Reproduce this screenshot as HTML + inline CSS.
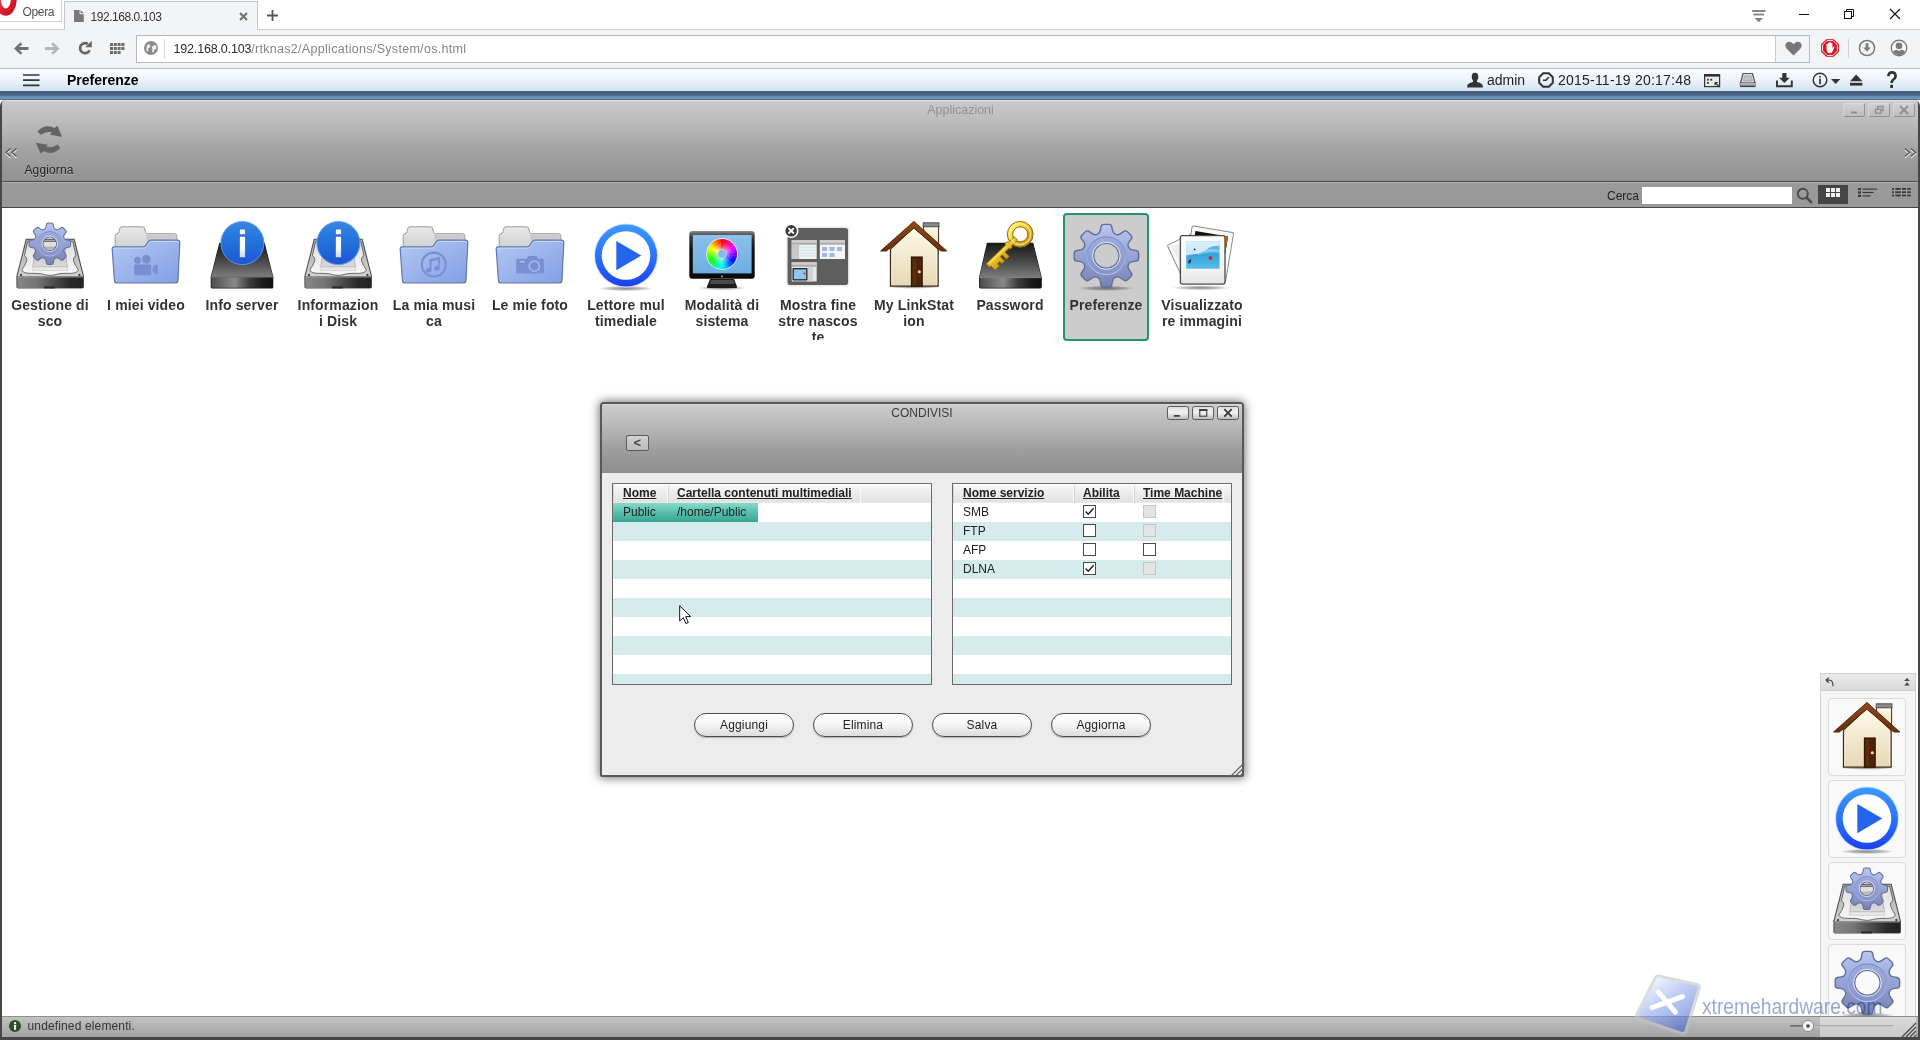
<!DOCTYPE html>
<html lang="it">
<head>
<meta charset="utf-8">
<title>192.168.0.103</title>
<style>
*{box-sizing:border-box;margin:0;padding:0}
html,body{width:1920px;height:1040px;overflow:hidden;background:#fff;font-family:"Liberation Sans",sans-serif;color:#222}
.abs{position:absolute}
#root{position:relative;width:1920px;height:1040px;overflow:hidden;background:#fff}
svg{display:block;overflow:visible}
/* ---------- browser chrome ---------- */
#tabstrip{left:0;top:0;width:1920px;height:30px;background:#fff;border-bottom:1px solid #c9cdd1}
#operabtn{left:-1px;top:-1px;width:63px;height:23px;border:1px solid #cfd2d5;background:#fff}
#operabtn span{position:absolute;left:22.5px;top:5px;font-size:12px;color:#505050;letter-spacing:-.35px}
#tab{left:64px;top:1px;width:194px;height:29px;background:#f3f4f6;border:1px solid #c3c7cb;border-bottom:none}
#tab span{position:absolute;left:25.5px;top:8px;font-size:12px;color:#333;letter-spacing:-.45px}
#navbar{left:0;top:30px;width:1920px;height:39px;background:#f3f4f6;border-bottom:1px solid #b9bdc1}
#addr{left:136px;top:35px;width:1674px;height:28px;background:#fff;border:1px solid #b4b8bc}
#addr .sep{position:absolute;left:27px;top:3px;width:1px;height:20px;background:#d5d7d9}
#addr .url{position:absolute;left:36.5px;top:6px;font-size:12.5px;color:#2c2c2c;white-space:nowrap;letter-spacing:-.17px}
#addr .url i{font-style:normal;color:#858585;letter-spacing:.3px}
#heartbox{position:absolute;right:0;top:0;width:34px;height:26px;border-left:1px solid #c8cacc;background:#f3f4f6}
/* ---------- app header ---------- */
#apphead{left:0;top:69px;width:1920px;height:22px;background:linear-gradient(#fdfeff 0%,#eef4fb 45%,#d3e2f4 100%)}
#apphead .title{position:absolute;left:67px;top:3px;font-size:14px;font-weight:bold;color:#000}
#apphead .txt{position:absolute;top:3px;font-size:14px;color:#222;white-space:nowrap}
#apphead .dt{letter-spacing:.22px}
#bluebar{left:0;top:91px;width:1920px;height:9px;background:linear-gradient(#485f80 0%,#4b6486 25%,#4e6a8f 48%,#688eb8 62%,#7096be 86%,#5a6c86 92%,#5a6c86 100%)}
/* ---------- main window ---------- */
#win{left:0;top:100px;width:1920px;height:940px;background:#474747;border-radius:6px 6px 0 0}
#wtool{left:2px;top:100px;width:1916px;height:81px;border-radius:4px 4px 0 0;background:linear-gradient(#dcdcdc 0,#dcdcdc 1px,#c8c8c8 2px,#bdbdbd 25%,#a4a4a4 60%,#919191 100%)}
#wtitle{left:0;top:103px;width:1921px;text-align:center;font-size:12.5px;color:#939393}
#wsearch{left:2px;top:182px;width:1916px;height:25px;background:#999;border-top:1px solid #b2b2b2}
#content{left:2px;top:208px;width:1916px;height:808px;background:#fff}
#status{left:2px;top:1016px;width:1916px;height:21px;background:linear-gradient(#c2c2c2,#a2a2a2);border-top:1px solid #8e8e8e}
#status .dk{position:absolute;left:1818px;top:0;width:96px;height:20px;background:rgba(255,255,255,.42)}
#status span{position:absolute;left:25.5px;top:2px;font-size:12px;color:#333;letter-spacing:.14px}
.wbtn{top:103px;width:22px;height:14px;border:1px solid;border-color:#dcdcdc #959595 #8e8e8e #d6d6d6;border-radius:2px;background:linear-gradient(#d2d2d2,#bebebe)}
.lbl{position:absolute;font-size:12px;color:#222;white-space:nowrap}
/* ---------- app grid ---------- */
.app{position:absolute;top:213px;width:86px;height:128px;text-align:center}
.app .ic{position:absolute;left:7px;top:7px;width:72px;height:72px}
.app .nm{position:absolute;left:-4px;top:84px;width:94px;font-size:14px;line-height:16px;font-weight:bold;color:#333;text-align:center;height:43px;overflow:hidden;letter-spacing:.13px;white-space:nowrap}
.app.sel{background:#cccccc;border:2px solid #23936c;border-radius:4px}
.app.sel .ic{left:5px;top:5px}
.app.sel .nm{left:-6px;top:82px}
/* ---------- dialog ---------- */
#dlg{left:600px;top:402px;width:644px;height:375px;background:#ececec;border:2px solid #585858;border-radius:4px 4px 2px 2px;box-shadow:0 0 10px 1px rgba(0,0,0,.55)}
#dhead{position:absolute;left:0;top:0;width:640px;height:69px;border-radius:2px 2px 0 0;background:linear-gradient(#dadada 0,#d2d2d2 1px,#cbcbcb 2px,#b9b9b9 30%,#9f9f9f 65%,#8e8e8e 100%)}
#dtitle{position:absolute;left:0;top:2px;width:640px;text-align:center;font-size:12px;color:#3c3c3c}
.dbtn{position:absolute;top:2.2px;width:21.6px;height:13.4px;border:1px solid #5c5c5c;border-radius:2.5px;background:linear-gradient(#dedede 0%,#f2f2f2 45%,#d6d6d6 75%,#bcbcbc 100%)}
.tbl{position:absolute;top:79px;height:202px;border:1px solid #6a6a6a;background:#fff;overflow:hidden}
.tbl .hd{position:absolute;left:0;top:1px;height:18px;width:100%;background:linear-gradient(#f7f7f7,#e2e2e2);border-bottom:1px solid #e9e9e9}
.tbl .hc{position:absolute;top:1px;height:18px;border-right:1px solid #fafafa;box-shadow:1px 0 0 #d6d6d6 inset}
.tbl .ht{position:absolute;top:2px;font-size:12px;font-weight:bold;color:#222;text-decoration:underline;white-space:nowrap}
.row{position:absolute;left:0;width:100%;height:19px}
.row.alt{background:#d6ebeb}
.row span{position:absolute;top:2px;font-size:12px;color:#222;white-space:nowrap}
.cb{position:absolute;top:2px;width:13px;height:13px;border:1px solid #4a4a4a;background:#fff}
.cb.dis{border-color:#c6c6c6;background:#e4e4e4}
.pbtn{position:absolute;top:309px;width:100px;height:23.5px;border:1px solid #4d4d4d;border-radius:13px;background:linear-gradient(#ffffff 0%,#f6f6f6 45%,#dedede 100%);font-size:12px;color:#222;text-align:center;line-height:22.6px;box-shadow:0 1px 1px rgba(0,0,0,.25);letter-spacing:.15px}
/* ---------- dock ---------- */
#dock{left:1820px;top:673px;width:96px;height:343px;background:#f5f5f5;border:1px solid #d0d0d0;border-bottom:none;overflow:hidden}
#dockhd{position:absolute;left:0;top:0;width:94px;height:17px;background:linear-gradient(#ebebeb,#d9d9d9);border-bottom:1px solid #cfcfcf}
.dcell{position:absolute;left:7.2px;width:77.6px;height:77.5px;border:1px solid #dadada;border-radius:4px;background:#f9f9f9}
</style>
</head>
<body>
<div id="root">
<!-- BROWSER CHROME -->
<div id="tabstrip" class="abs"></div>
<div id="operabtn" class="abs"><span>Opera</span></div>
<div id="tab" class="abs"><span>192.168.0.103</span></div>
<div id="navbar" class="abs"></div>
<div id="addr" class="abs"><div class="sep"></div><div class="url">192.168.0.103<i>/rtknas2/Applications/System/os.html</i></div><div id="heartbox"></div></div>
<!--CHROMEICONS-->
<svg class="abs" style="left:0px;top:0px" width="18" height="17" viewBox="0 0 18 17"><defs><linearGradient id="gOp" x1="0" y1="0" x2="1" y2="1"><stop offset="0" stop-color="#ff6a6a"/><stop offset=".6" stop-color="#e02030"/><stop offset="1" stop-color="#b80c1a"/></linearGradient><clipPath id="cpOp"><rect x="0" y="0" width="18" height="17"/></clipPath></defs><path clip-path="url(#cpOp)" fill-rule="evenodd" d="M-5.6 -1 A11.2 16.8 0 1 0 16.8 -1 A11.2 16.8 0 1 0 -5.6 -1 Z M0.8 -1 A5 9.4 0 1 1 10.8 -1 A5 9.4 0 1 1 0.8 -1 Z" fill="url(#gOp)"/></svg>
<svg class="abs" style="left:74px;top:10px" width="10" height="12" viewBox="0 0 10 12"><path d="M0 0 L5.6 0 L5.6 4.2 L9.8 4.2 L9.8 12 L0 12 Z M6.6 0 L9.8 3.2 L6.6 3.2 Z" fill="#7a7a7a"/></svg>
<svg class="abs" style="left:239px;top:12px" width="9" height="9" viewBox="0 0 9 9"><path d="M1 1 L8 8 M8 1 L1 8" stroke="#6e6e6e" stroke-width="2"/></svg>
<svg class="abs" style="left:267px;top:10px" width="11" height="11" viewBox="0 0 11 11"><path d="M5.5 0 V11 M0 5.5 H11" stroke="#555" stroke-width="1.8"/></svg>
<svg class="abs" style="left:1752px;top:10px" width="14" height="13" viewBox="0 0 14 13"><path d="M0 1 H13.5 M1.5 4.5 H12 M0 1" stroke="#808080" stroke-width="1.4"/><path d="M1.5 4.5 H12" stroke="#808080" stroke-width="1.4"/><path d="M2.5 8 L11 8 L6.75 12.2 Z" fill="#808080"/><path d="M0.5 1 H13" stroke="#808080" stroke-width="1.5"/></svg>
<svg class="abs" style="left:1799px;top:14px" width="10" height="1" viewBox="0 0 10 1"><rect width="10" height="1" fill="#111"/></svg>
<svg class="abs" style="left:1844px;top:9px" width="10" height="10" viewBox="0 0 10 10"><path d="M2.5 2.5 V0.5 H9.5 V7.5 H7.5" fill="none" stroke="#111" stroke-width="1"/><rect x="0.5" y="2.5" width="7" height="7" fill="none" stroke="#111" stroke-width="1"/></svg>
<svg class="abs" style="left:1890px;top:9px" width="10" height="10" viewBox="0 0 10 10"><path d="M0 0 L10 10 M10 0 L0 10" stroke="#111" stroke-width="1.1"/></svg>
<svg class="abs" style="left:14px;top:42px" width="15" height="13" viewBox="0 0 15 13"><path d="M0 6.5 L6.5 0.3 L8.3 2.2 L5.2 5.1 L14.5 5.1 L14.5 7.9 L5.2 7.9 L8.3 10.8 L6.5 12.7 Z" fill="#6d7277"/></svg>
<svg class="abs" style="left:45px;top:42px" width="15" height="13" viewBox="0 0 15 13"><path d="M14.5 6.5 L8 0.3 L6.2 2.2 L9.3 5.1 L0 5.1 L0 7.9 L9.3 7.9 L6.2 10.8 L8 12.7 Z" fill="#b3b6b9"/></svg>
<svg class="abs" style="left:78px;top:41px" width="14" height="14" viewBox="0 0 14 14"><path d="M11.6 9.3 A5 5 0 1 1 9.8 3" fill="none" stroke="#666" stroke-width="2.7"/><path d="M7.2 6.2 L13.8 6.2 L13.8 -0.2 Z" fill="#666"/></svg>
<svg class="abs" style="left:110px;top:43px" width="15" height="11" viewBox="0 0 15 11"><rect x="0.0" y="0" width="3" height="3" fill="#6a6a6a"/><rect x="3.8" y="0" width="3" height="3" fill="#6a6a6a"/><rect x="7.6" y="0" width="3" height="3" fill="#6a6a6a"/><rect x="11.399999999999999" y="0" width="3" height="3" fill="#6a6a6a"/><rect x="0.0" y="4" width="3" height="3" fill="#6a6a6a"/><rect x="3.8" y="4" width="3" height="3" fill="#6a6a6a"/><rect x="7.6" y="4" width="3" height="3" fill="#6a6a6a"/><rect x="11.399999999999999" y="4" width="3" height="3" fill="#6a6a6a"/><rect x="0.0" y="8" width="3" height="3" fill="#6a6a6a"/><rect x="3.8" y="8" width="3" height="3" fill="#6a6a6a"/><rect x="7.6" y="8" width="3" height="3" fill="#6a6a6a"/></svg>
<svg class="abs" style="left:144px;top:41px" width="14" height="14" viewBox="0 0 14 14"><circle cx="7" cy="7" r="7" fill="#8a8a8a"/><path d="M3 4 Q5 2.5 6.5 4 L6 6.5 L4 7 L4.5 9.5 L3 11 Q1.8 8 3 4 Z M8.5 5 L11.5 3.8 Q12.8 6 12.3 8 L10.5 8.5 L9.5 11.5 L8 11 L8.5 8 L7.5 7 Z" fill="#f2f2f2"/></svg>
<svg class="abs" style="left:1785px;top:41px" width="17" height="15" viewBox="0 0 17 15"><path d="M8.5 14.5 L1.5 7.5 Q-0.8 4.5 1.5 1.8 Q4.5 -0.8 8.5 3 Q12.5 -0.8 15.5 1.8 Q17.8 4.5 15.5 7.5 Z" fill="#777"/></svg>
<svg class="abs" style="left:1820px;top:38px" width="20" height="20" viewBox="0 0 20 20"><polygon points="18.87,13.67 13.67,18.87 6.33,18.87 1.13,13.67 1.13,6.33 6.33,1.13 13.67,1.13 18.87,6.33" fill="#c8101c"/><polygon points="17.39,13.06 13.06,17.39 6.94,17.39 2.61,13.06 2.61,6.94 6.94,2.61 13.06,2.61 17.39,6.94" fill="#d81420" stroke="#fff" stroke-width=".9"/><path d="M6.5 9.5 L6.5 6.3 Q7.2 5.6 7.9 6.3 L7.9 5 Q8.7 4.3 9.4 5 L9.4 4.4 Q10.2 3.7 10.9 4.4 L10.9 5.2 Q11.7 4.6 12.4 5.3 L12.4 10 L13.4 8.6 Q14.4 8.2 14.5 9.2 L12.6 13.2 Q11.8 15.3 9.8 15.3 Q7.3 15.3 6.8 13 Z" fill="#fff"/></svg>
<svg class="abs" style="left:1848px;top:39px" width="1" height="19" viewBox="0 0 1 19"><rect width="1" height="19" fill="#d0d2d4"/></svg>
<svg class="abs" style="left:1858px;top:39px" width="18" height="18" viewBox="0 0 18 18"><circle cx="9" cy="9" r="7.6" fill="none" stroke="#7b7b7b" stroke-width="1.5"/><path d="M7.6 4.2 H10.4 V8.6 H12.8 L9 12.8 L5.2 8.6 H7.6 Z" fill="#7b7b7b"/></svg>
<svg class="abs" style="left:1890px;top:39px" width="18" height="18" viewBox="0 0 18 18"><defs><clipPath id="cpU"><circle cx="9" cy="9" r="7.2"/></clipPath></defs><circle cx="9" cy="9" r="7.7" fill="#fff" stroke="#7b7b7b" stroke-width="1.4"/><g clip-path="url(#cpU)" fill="#7b7b7b"><circle cx="9" cy="6.8" r="3.4"/><path d="M1.5 18 Q1.5 11 6.8 10.8 L9 12 L11.2 10.8 Q16.5 11 16.5 18 Z"/></g></svg>
<!--/CHROMEICONS-->
<!-- APP HEADER -->
<div id="apphead" class="abs"><div class="title">Preferenze</div><div class="txt" style="left:1487px">admin</div><div class="txt dt" style="left:1558px">2015-11-19 20:17:48</div></div>
<div id="bluebar" class="abs"></div>
<!--HEADICONS-->
<svg class="abs" style="left:23px;top:74px" width="17" height="13" viewBox="0 0 17 13"><path d="M0 1 H16.5 M0 6.2 H16.5 M0 11.4 H16.5" stroke="#333" stroke-width="1.7"/></svg>
<svg class="abs" style="left:1467px;top:72px" width="16" height="16" viewBox="0 0 16 16"><path d="M8 0.8 Q11.3 0.8 11.3 4.6 Q11.3 7.2 10 8.6 L10 10 Q15.8 11.5 15.8 14 L15.8 15.6 L0.2 15.6 L0.2 14 Q0.2 11.5 6 10 L6 8.6 Q4.7 7.2 4.7 4.6 Q4.7 0.8 8 0.8 Z" fill="#333"/></svg>
<svg class="abs" style="left:1538px;top:72px" width="16" height="16" viewBox="0 0 16 16"><path d="M5.2 1.2 L10.8 1.2 L14.8 5.2 L14.8 10.8 L10.8 14.8 L5.2 14.8 L1.2 10.8 L1.2 5.2 Z" fill="none" stroke="#333" stroke-width="2" stroke-linejoin="round"/><path d="M10.8 5 L8 8.3 L5 8.3" fill="none" stroke="#333" stroke-width="1.6"/></svg>
<svg class="abs" style="left:1704px;top:74px" width="17" height="14" viewBox="0 0 17 14"><rect x="0.6" y="0.6" width="15" height="12" fill="#e9e9e9" stroke="#333" stroke-width="1.2"/><rect x="0.6" y="0.6" width="15" height="2" fill="#333"/><rect x="3" y="4.8" width="1.8" height="1.8" fill="#333"/><rect x="6.3" y="4.8" width="1.8" height="1.8" fill="#333"/><rect x="3" y="8" width="1.8" height="1.8" fill="#333"/><path d="M11 8.5 L15 12.5 M11 8.5 V11.3 M11 8.5 H13.8" stroke="#333" stroke-width="1.1" fill="none"/></svg>
<svg class="abs" style="left:1739px;top:72px" width="18" height="16" viewBox="0 0 18 16"><path d="M4 1.5 L13.5 1.5 L16 11 L1.5 11 Z" fill="#dcdcdc" stroke="#555" stroke-width="1.2" stroke-linejoin="round"/><path d="M5.5 3.8 L12 3.8 L13.2 9 L4.3 9 Z" fill="#c4c4c4" stroke="#999" stroke-width=".6"/><rect x="1" y="11" width="15.5" height="2" fill="#d0d0d0" stroke="#666" stroke-width=".6"/><rect x="1" y="13.5" width="15.5" height="1.6" fill="#444"/></svg>
<svg class="abs" style="left:1776px;top:72px" width="17" height="16" viewBox="0 0 17 16"><path d="M6.3 1 H10.5 V5.8 H13.8 L8.4 11 L3 5.8 H6.3 Z" fill="#333"/><path d="M1 8.5 V14.2 H15.8 V8.5" fill="none" stroke="#333" stroke-width="1.9"/></svg>
<svg class="abs" style="left:1812px;top:72px" width="16" height="16" viewBox="0 0 16 16"><circle cx="8" cy="8" r="6.8" fill="none" stroke="#333" stroke-width="1.4"/><rect x="7.2" y="6.6" width="1.7" height="5.6" fill="#333"/><rect x="7.2" y="3.8" width="1.7" height="1.7" fill="#333"/></svg>
<svg class="abs" style="left:1831px;top:79px" width="10" height="5" viewBox="0 0 10 5"><path d="M0 0 H9.4 L4.7 5 Z" fill="#333"/></svg>
<svg class="abs" style="left:1850px;top:74px" width="13" height="13" viewBox="0 0 13 13"><path d="M6.2 0.5 L12.4 7.3 L0 7.3 Z" fill="#333"/><rect x="0" y="8.8" width="12.4" height="2.8" fill="#333"/></svg>
<div class="abs" style="left:1885.5px;top:66px;font-size:24px;font-weight:bold;color:#333;line-height:28px;transform-origin:0 0;transform:scaleX(.82)">?</div>
<!--/HEADICONS-->
<!-- MAIN WINDOW -->
<div id="win" class="abs"></div>
<div id="wtool" class="abs"></div>
<div id="wtitle" class="abs">Applicazioni</div>
<div class="abs wbtn" style="left:1843px"></div><div class="abs wbtn" style="left:1868px"></div><div class="abs wbtn" style="left:1893px"></div>
<div id="wsearch" class="abs"></div>
<div id="content" class="abs"></div>
<div class="lbl" style="left:24.5px;top:163px;letter-spacing:.12px;text-shadow:0 1px 0 rgba(255,255,255,.35)">Aggiorna</div>
<div class="lbl" style="left:1607px;top:189px">Cerca</div>
<div class="abs" style="left:1642px;top:187px;width:150px;height:17px;background:#fff"></div>
<div class="abs" style="left:1818px;top:185px;width:30px;height:19px;background:#444"></div>
<!--WINICONS-->
<svg class="abs" style="left:5px;top:148px" width="13" height="11" viewBox="0 0 13 11"><path d="M5.5 1.8 L1 5.8 L5.5 9.8 M11.5 1.8 L7 5.8 L11.5 9.8" fill="none" stroke="#f4f4f4" stroke-width="1.5"/><path d="M5.5 0.5 L1 4.5 L5.5 8.5 M11.5 0.5 L7 4.5 L11.5 8.5" fill="none" stroke="#585858" stroke-width="1.4"/></svg>
<svg class="abs" style="left:1904px;top:148px" width="13" height="11" viewBox="0 0 13 11"><path d="M1 1.8 L5.5 5.8 L1 9.8 M7 1.8 L11.5 5.8 L7 9.8" fill="none" stroke="#f4f4f4" stroke-width="1.5"/><path d="M1 0.5 L5.5 4.5 L1 8.5 M7 0.5 L11.5 4.5 L7 8.5" fill="none" stroke="#585858" stroke-width="1.4"/></svg>
<svg class="abs" style="left:35px;top:124px" width="28" height="31" viewBox="0 0 28 31"><path d="M2.4 7.4 Q10 -0.8 19.6 3.9 L22.6 1.7 L27 13.1 L14.6 10.5 L16.9 8.3 Q11.2 7 5.8 10.7 Z" fill="#646464"/>
<path d="M25.4 24 Q17.5 32 9 27.2 L5.7 29.5 L0.8 18.7 L12.7 20.8 L11.4 22.8 Q17 24.6 22.5 20.6 Z" fill="#646464"/></svg>
<svg class="abs" style="left:1843px;top:103px" width="22" height="14" viewBox="0 0 22 14"><rect x="8" y="8.5" width="6" height="2" fill="#8f8f8f"/></svg>
<svg class="abs" style="left:1868px;top:103px" width="22" height="14" viewBox="0 0 22 14"><path d="M9.5 5.5 V3.5 H15 V7.5 H13" fill="none" stroke="#8f8f8f" stroke-width="1.4"/><rect x="7.5" y="6.2" width="5.5" height="4" fill="none" stroke="#8f8f8f" stroke-width="1.4"/></svg>
<svg class="abs" style="left:1893px;top:103px" width="22" height="14" viewBox="0 0 22 14"><path d="M7 3 L15 11 M15 3 L7 11" stroke="#8f8f8f" stroke-width="1.8"/></svg>
<svg class="abs" style="left:1796px;top:187px" width="17" height="17" viewBox="0 0 17 17"><circle cx="6.8" cy="6.8" r="5" fill="none" stroke="#4a4a4a" stroke-width="1.9"/><path d="M10.5 10.5 L15.2 15.2" stroke="#4a4a4a" stroke-width="2.6" stroke-linecap="round"/></svg>
<svg class="abs" style="left:1826px;top:188px" width="14" height="9" viewBox="0 0 14 9"><rect x="0" y="0" width="4" height="4" fill="#f0f0f0"/><rect x="5" y="0" width="4" height="4" fill="#f0f0f0"/><rect x="10" y="0" width="4" height="4" fill="#f0f0f0"/><rect x="0" y="5" width="4" height="4" fill="#f0f0f0"/><rect x="5" y="5" width="4" height="4" fill="#f0f0f0"/><rect x="10" y="5" width="4" height="4" fill="#f0f0f0"/></svg>
<svg class="abs" style="left:1858px;top:188px" width="19" height="10" viewBox="0 0 19 10"><rect x="0" y="0.0" width="3" height="2.2" fill="#3a3a3a"/><rect x="4.5" y="0.5" width="14.5" height="1.2" fill="#3a3a3a"/><rect x="0" y="3.4" width="3" height="2.2" fill="#3a3a3a"/><rect x="4.5" y="3.9" width="11" height="1.2" fill="#3a3a3a"/><rect x="0" y="6.8" width="3" height="2.2" fill="#3a3a3a"/><rect x="4.5" y="7.3" width="8" height="1.2" fill="#3a3a3a"/></svg>
<svg class="abs" style="left:1892px;top:188px" width="19" height="9" viewBox="0 0 19 9"><rect x="0" y="0.0" width="2" height="1.8" fill="#3a3a3a"/><rect x="3.3" y="0.0" width="5.5" height="1.8" fill="#3a3a3a"/><rect x="10" y="0.0" width="4" height="1.8" fill="#3a3a3a"/><rect x="15.2" y="0.0" width="3.5" height="1.8" fill="#3a3a3a"/><rect x="0" y="3.3" width="2" height="1.8" fill="#3a3a3a"/><rect x="3.3" y="3.3" width="5.5" height="1.8" fill="#3a3a3a"/><rect x="10" y="3.3" width="4" height="1.8" fill="#3a3a3a"/><rect x="15.2" y="3.3" width="3.5" height="1.8" fill="#3a3a3a"/><rect x="0" y="6.6" width="2" height="1.8" fill="#3a3a3a"/><rect x="3.3" y="6.6" width="5.5" height="1.8" fill="#3a3a3a"/><rect x="10" y="6.6" width="4" height="1.8" fill="#3a3a3a"/><rect x="15.2" y="6.6" width="3.5" height="1.8" fill="#3a3a3a"/></svg>
<!--/WINICONS-->
<!-- APP GRID -->

<svg width="0" height="0" style="position:absolute">
<defs>
<linearGradient id="gGear" x1="0" y1="0" x2="0" y2="1"><stop offset="0" stop-color="#b9c8f1"/><stop offset=".45" stop-color="#98a7d7"/><stop offset="1" stop-color="#7582b4"/></linearGradient>
<linearGradient id="gGearIn" x1="0" y1="0" x2="0" y2="1"><stop offset="0" stop-color="#9eaddd"/><stop offset="1" stop-color="#8693c8"/></linearGradient>
<linearGradient id="gGear2" x1="0" y1="0" x2="0" y2="1"><stop offset="0" stop-color="#7485c0"/><stop offset="1" stop-color="#b4c3f0"/></linearGradient>
<linearGradient id="gFold" x1="0" y1="0" x2="1" y2="1"><stop offset="0" stop-color="#b3c6f3"/><stop offset=".5" stop-color="#9cb4ec"/><stop offset="1" stop-color="#829fe2"/></linearGradient>
<linearGradient id="gFoldB" x1="0" y1="0" x2="0" y2="1"><stop offset="0" stop-color="#aebfee"/><stop offset="1" stop-color="#8ea6e0"/></linearGradient>
<linearGradient id="gPaper" x1="0" y1="0" x2="0" y2="1"><stop offset="0" stop-color="#e8e8e8"/><stop offset=".6" stop-color="#d2d2d2"/><stop offset="1" stop-color="#c4c4c4"/></linearGradient>
<linearGradient id="gBlkTop" x1="0" y1="0" x2="0" y2="1"><stop offset="0" stop-color="#1a1a1a"/><stop offset=".55" stop-color="#4a4a4a"/><stop offset="1" stop-color="#7c7c7c"/></linearGradient>
<linearGradient id="gBlkFront" x1="0" y1="0" x2="1" y2="0"><stop offset="0" stop-color="#4c4c4c"/><stop offset=".38" stop-color="#8a8a8a"/><stop offset=".62" stop-color="#3c3c3c"/><stop offset=".85" stop-color="#1a1a1a"/><stop offset="1" stop-color="#111"/></linearGradient>
<linearGradient id="gHddTop" x1="0" y1="0" x2="0" y2="1"><stop offset="0" stop-color="#adadad"/><stop offset="1" stop-color="#d2d2d2"/></linearGradient>
<linearGradient id="gHddFront" x1="0" y1="0" x2="1" y2="0"><stop offset="0" stop-color="#888"/><stop offset=".3" stop-color="#747474"/><stop offset=".55" stop-color="#4e4e4e"/><stop offset=".8" stop-color="#2a2a2a"/><stop offset="1" stop-color="#222"/></linearGradient>
<linearGradient id="gHddIn" x1="0" y1="0" x2="0" y2="1"><stop offset="0" stop-color="#bcbcbc"/><stop offset="1" stop-color="#dcdcdc"/></linearGradient>
<linearGradient id="gHddPlate" x1="0" y1="0" x2="0" y2="1"><stop offset="0" stop-color="#dedede"/><stop offset="1" stop-color="#f8f8f8"/></linearGradient>
<linearGradient id="gInfo" x1="0" y1="0" x2="0" y2="1"><stop offset="0" stop-color="#3388e2"/><stop offset=".5" stop-color="#2270da"/><stop offset="1" stop-color="#1d55d4"/></linearGradient>
<linearGradient id="gI" x1="0" y1="0" x2="0" y2="1"><stop offset="0" stop-color="#ffffff"/><stop offset=".5" stop-color="#ffffff"/><stop offset="1" stop-color="#c9d6ee"/></linearGradient>
<linearGradient id="gPlay" x1="0" y1="0" x2="0" y2="1"><stop offset="0" stop-color="#3d98ff"/><stop offset=".5" stop-color="#2a74f8"/><stop offset="1" stop-color="#1b3ff0"/></linearGradient>
<linearGradient id="gWall" x1="0" y1="0" x2="0" y2="1"><stop offset="0" stop-color="#fffaea"/><stop offset="1" stop-color="#e6d8b4"/></linearGradient>
<linearGradient id="gRoof" x1="0" y1="0" x2="0" y2="1"><stop offset="0" stop-color="#8f4a1a"/><stop offset="1" stop-color="#6b2f0a"/></linearGradient>
<linearGradient id="gKey2" gradientUnits="userSpaceOnUse" x1="0" y1="13" x2="0" y2="-13"><stop offset="0" stop-color="#fff27a"/><stop offset=".45" stop-color="#f0c624"/><stop offset="1" stop-color="#c08c0a"/></linearGradient>
<linearGradient id="gKey" x1="0" y1="0" x2="1" y2="1"><stop offset="0" stop-color="#fff27a"/><stop offset=".5" stop-color="#f1c92b"/><stop offset="1" stop-color="#c7950e"/></linearGradient>
<linearGradient id="gScreen" x1="0" y1="0" x2="0" y2="1"><stop offset="0" stop-color="#8cc0ec"/><stop offset="1" stop-color="#6daee2"/></linearGradient>
<linearGradient id="gSky" x1="0" y1="0" x2="0" y2="1"><stop offset="0" stop-color="#7cc8ec"/><stop offset=".5" stop-color="#35a4de"/><stop offset="1" stop-color="#58bce8"/></linearGradient>
<linearGradient id="gPhoto" x1="0" y1="0" x2="0" y2="1"><stop offset="0" stop-color="#ffffff"/><stop offset=".7" stop-color="#f4f4f4"/><stop offset="1" stop-color="#e4e4e4"/></linearGradient>
<radialGradient id="gWheelW" cx=".5" cy=".5" r=".5"><stop offset="0" stop-color="#fff" stop-opacity=".75"/><stop offset=".3" stop-color="#fff" stop-opacity=".45"/><stop offset=".75" stop-color="#fff" stop-opacity="0"/></radialGradient>
<linearGradient id="gBezel" x1="0" y1="0" x2="0" y2="1"><stop offset="0" stop-color="#8a8a8a"/><stop offset=".12" stop-color="#3a3a3a"/><stop offset=".4" stop-color="#111"/><stop offset="1" stop-color="#0a0a0a"/></linearGradient>
<radialGradient id="gShadow" cx=".5" cy=".5" r=".5"><stop offset="0" stop-color="#000" stop-opacity=".45"/><stop offset=".6" stop-color="#000" stop-opacity=".25"/><stop offset="1" stop-color="#000" stop-opacity="0"/></radialGradient>

<symbol id="i-hddgear" viewBox="0 0 72 72">
<path d="M11.8 18.8 L60.6 18.8 L70 56.2 L70 66.8 Q70 68.6 68.2 68.6 L4.2 68.6 Q2.4 68.6 2.4 66.8 L2.4 56.2 Z" fill="#4c4c4c"/>
<path d="M12.6 19.8 L59.8 19.8 L68.8 56 L3.6 56 Z" fill="url(#gHddTop)"/>
<path d="M13.6 21.4 L58.8 21.4 L62 35.8 Q58.6 37.6 59.4 40.4 Q61 45.4 64.4 50 Q63.2 53.4 55.5 53.4 Q46 53 41 54.8 Q36 56 31 54.8 Q26 53 16.8 53.4 Q9 53.4 7.8 50 Q11.2 45.4 12.8 40.4 Q13.6 37.6 10.4 35.8 Z" fill="url(#gHddPlate)" stroke="#5e5e5e" stroke-width=".9" stroke-linejoin="round"/>
<path d="M21.5 27 L50.8 27 L53.4 47 L18.8 47 Z" fill="url(#gHddIn)" stroke="#a8a8a8" stroke-width=".7"/>
<path d="M18.8 47 L53.4 47 L54 50.4 L18.2 50.4 Z" fill="#e9e9e9" stroke="#bdbdbd" stroke-width=".5"/>
<rect x="3.4" y="56.6" width="65.6" height="11.4" rx="1.2" fill="url(#gHddFront)"/>
<rect x="3.4" y="56.3" width="65.6" height="1.1" fill="#a0a0a0"/>
<rect x="30" y="66.4" width="11" height="2" fill="#2a2a2a"/>
<circle cx="7" cy="55" r="1.2" fill="#4a4a4a"/><circle cx="65.4" cy="55" r="1.2" fill="#4a4a4a"/>
<path d="M50.02 17.91 Q50.72 19.61 52.63 19.93 L54.90 20.31 Q56.55 20.58 56.55 22.25 L56.55 25.35 Q56.55 27.02 54.90 27.29 L52.63 27.67 Q50.72 27.99 50.02 29.69 L50.02 29.69 Q49.31 31.39 50.44 32.96 L51.78 34.83 Q52.75 36.20 51.57 37.38 L49.38 39.57 Q48.20 40.75 46.83 39.78 L44.96 38.44 Q43.39 37.31 41.69 38.02 L41.69 38.02 Q39.99 38.72 39.67 40.63 L39.29 42.90 Q39.02 44.55 37.35 44.55 L34.25 44.55 Q32.58 44.55 32.31 42.90 L31.93 40.63 Q31.61 38.72 29.91 38.02 L29.91 38.02 Q28.21 37.31 26.64 38.44 L24.77 39.78 Q23.40 40.75 22.22 39.57 L20.03 37.38 Q18.85 36.20 19.82 34.83 L21.16 32.96 Q22.29 31.39 21.58 29.69 L21.58 29.69 Q20.88 27.99 18.97 27.67 L16.70 27.29 Q15.05 27.02 15.05 25.35 L15.05 22.25 Q15.05 20.58 16.70 20.31 L18.97 19.93 Q20.88 19.61 21.58 17.91 L21.58 17.91 Q22.29 16.21 21.16 14.64 L19.82 12.77 Q18.85 11.40 20.03 10.22 L22.22 8.03 Q23.40 6.85 24.77 7.82 L26.64 9.16 Q28.21 10.29 29.91 9.58 L29.91 9.58 Q31.61 8.88 31.93 6.97 L32.31 4.70 Q32.58 3.05 34.25 3.05 L37.35 3.05 Q39.02 3.05 39.29 4.70 L39.67 6.97 Q39.99 8.88 41.69 9.58 L41.69 9.58 Q43.39 10.29 44.96 9.16 L46.83 7.82 Q48.20 6.85 49.38 8.03 L51.57 10.22 Q52.75 11.40 51.78 12.77 L50.44 14.64 Q49.31 16.21 50.02 17.91 Z M28.9 23.8 A6.9 6.9 0 1 0 42.699999999999996 23.8 A6.9 6.9 0 1 0 28.9 23.8 Z" fill="url(#gGear)" fill-rule="evenodd" stroke="#646e94" stroke-width="1.05" stroke-linejoin="round"/>
<path d="M23.499999999999996 23.8 A12.3 12.3 0 1 0 48.099999999999994 23.8 A12.3 12.3 0 1 0 23.499999999999996 23.8 Z M28.449999999999996 23.8 A7.3500000000000005 7.3500000000000005 0 1 0 43.15 23.8 A7.3500000000000005 7.3500000000000005 0 1 0 28.449999999999996 23.8 Z" fill="url(#gGearIn)" fill-rule="evenodd"/>
<circle cx="35.8" cy="23.8" r="12.3" fill="none" stroke="url(#gGear2)" stroke-width="0.83"/>
<circle cx="35.8" cy="23.8" r="7.80" fill="none" stroke="#eef1fb" stroke-width="0.75" opacity=".9"/>
</symbol>
<symbol id="i-hddinfo" viewBox="0 0 72 72">
<path d="M11.8 18.8 L60.6 18.8 L70 56.2 L70 66.8 Q70 68.6 68.2 68.6 L4.2 68.6 Q2.4 68.6 2.4 66.8 L2.4 56.2 Z" fill="#4c4c4c"/>
<path d="M12.6 19.8 L59.8 19.8 L68.8 56 L3.6 56 Z" fill="url(#gHddTop)"/>
<path d="M13.6 21.4 L58.8 21.4 L62 35.8 Q58.6 37.6 59.4 40.4 Q61 45.4 64.4 50 Q63.2 53.4 55.5 53.4 Q46 53 41 54.8 Q36 56 31 54.8 Q26 53 16.8 53.4 Q9 53.4 7.8 50 Q11.2 45.4 12.8 40.4 Q13.6 37.6 10.4 35.8 Z" fill="url(#gHddPlate)" stroke="#5e5e5e" stroke-width=".9" stroke-linejoin="round"/>
<path d="M21.5 27 L50.8 27 L53.4 47 L18.8 47 Z" fill="url(#gHddIn)" stroke="#a8a8a8" stroke-width=".7"/>
<path d="M18.8 47 L53.4 47 L54 50.4 L18.2 50.4 Z" fill="#e9e9e9" stroke="#bdbdbd" stroke-width=".5"/>
<rect x="3.4" y="56.6" width="65.6" height="11.4" rx="1.2" fill="url(#gHddFront)"/>
<rect x="3.4" y="56.3" width="65.6" height="1.1" fill="#a0a0a0"/>
<rect x="30" y="66.4" width="11" height="2" fill="#2a2a2a"/>
<circle cx="7" cy="55" r="1.2" fill="#4a4a4a"/><circle cx="65.4" cy="55" r="1.2" fill="#4a4a4a"/>

<circle cx="36.4" cy="23.1" r="21.5" fill="url(#gInfo)" stroke="#5d9be8" stroke-width="1"/>
<rect x="33.6" y="9.100000000000001" width="5.6" height="5.4" fill="#fff" stroke="#1d5fc8" stroke-width=".5"/>
<rect x="33.6" y="16.3" width="5.6" height="21.2" fill="url(#gI)" stroke="#1d5fc8" stroke-width=".5"/>
</symbol>
<symbol id="i-infoserver" viewBox="0 0 72 72">
<path d="M13.3 22.8 L58.7 22.8 L67.3 56.8 L67.3 67 Q67.3 68.6 65.8 68.6 L6.2 68.6 Q4.7 68.6 4.7 67 L4.7 56.8 Z" fill="#161616"/>
<path d="M13.8 23.3 L58.2 23.3 L66.8 56.8 L5.2 56.8 Z" fill="url(#gBlkTop)"/>
<rect x="5.4" y="57.2" width="61.2" height="10.6" rx="1" fill="url(#gBlkFront)"/>
<rect x="5" y="56.4" width="62" height="1.1" fill="#7e7e7e"/>

<circle cx="36.4" cy="23.1" r="21.5" fill="url(#gInfo)" stroke="#5d9be8" stroke-width="1"/>
<rect x="33.6" y="9.100000000000001" width="5.6" height="5.4" fill="#fff" stroke="#1d5fc8" stroke-width=".5"/>
<rect x="33.6" y="16.3" width="5.6" height="21.2" fill="url(#gI)" stroke="#1d5fc8" stroke-width=".5"/>
</symbol>
<symbol id="i-fvideo" viewBox="0 0 72 72">
<path d="M5.2 40 L5.2 15.8 Q5.2 14.2 7 13.8 Q8.8 13.4 9.2 11.5 L10 8 Q10.3 6.8 11.6 6.8 L32.6 6.8 Q34 6.8 34.4 8 L35.8 12.4 Q36.2 13.7 37.6 13.7 L64.8 13.7 Q66.8 13.7 66.8 15.7 L66.8 40 Z" fill="url(#gPaper)" stroke="#9c9c9c" stroke-width="1"/>
<path d="M36.5 14.7 L64.8 14.7 Q65.8 14.7 65.8 15.7 L65.8 22 L36.5 22 Z" fill="#c6c6c6" opacity=".8"/>
<path d="M2.2 29 Q2.2 26.8 4.4 26.8 L33.4 26.8 Q35 26.8 35.8 25.4 L38.6 21.4 Q39.4 20.2 41 20.2 L67.4 20.2 Q69.8 20.2 69.8 22.6 L68 60.4 Q67.8 63 65.2 63 L7.2 63 Q4.6 63 4.4 60.4 Z" fill="url(#gFold)" stroke="#6278a8" stroke-width="1.2" stroke-linejoin="round"/>
<path d="M3.5 29.3 Q3.5 28.1 4.9 28.1 L33.8 28.1 Q35.8 28 36.8 26.3 L39.5 22.4 Q40.1 21.5 41.4 21.5 L67 21.5 Q68.5 21.5 68.5 22.8" fill="none" stroke="#d2defb" stroke-width="1" opacity=".85"/>

<circle cx="27.5" cy="40.2" r="3.5" fill="#7690d2"/><circle cx="36.4" cy="39.1" r="4.3" fill="#7690d2"/>
<rect x="24.1" y="44.5" width="17" height="10.7" rx=".8" fill="#7690d2"/>
<path d="M42.4 49.6 Q42.6 46.2 46.4 44.6 Q47.9 44.4 47.9 46 L47.9 53 Q47.9 54.6 46.4 54.4 Q42.6 53 42.4 49.6 Z" fill="#7690d2"/>
</symbol>
<symbol id="i-fmusic" viewBox="0 0 72 72">
<path d="M5.2 40 L5.2 15.8 Q5.2 14.2 7 13.8 Q8.8 13.4 9.2 11.5 L10 8 Q10.3 6.8 11.6 6.8 L32.6 6.8 Q34 6.8 34.4 8 L35.8 12.4 Q36.2 13.7 37.6 13.7 L64.8 13.7 Q66.8 13.7 66.8 15.7 L66.8 40 Z" fill="url(#gPaper)" stroke="#9c9c9c" stroke-width="1"/>
<path d="M36.5 14.7 L64.8 14.7 Q65.8 14.7 65.8 15.7 L65.8 22 L36.5 22 Z" fill="#c6c6c6" opacity=".8"/>
<path d="M2.2 29 Q2.2 26.8 4.4 26.8 L33.4 26.8 Q35 26.8 35.8 25.4 L38.6 21.4 Q39.4 20.2 41 20.2 L67.4 20.2 Q69.8 20.2 69.8 22.6 L68 60.4 Q67.8 63 65.2 63 L7.2 63 Q4.6 63 4.4 60.4 Z" fill="url(#gFold)" stroke="#6278a8" stroke-width="1.2" stroke-linejoin="round"/>
<path d="M3.5 29.3 Q3.5 28.1 4.9 28.1 L33.8 28.1 Q35.8 28 36.8 26.3 L39.5 22.4 Q40.1 21.5 41.4 21.5 L67 21.5 Q68.5 21.5 68.5 22.8" fill="none" stroke="#d2defb" stroke-width="1" opacity=".85"/>

<circle cx="35.8" cy="44.6" r="12" fill="none" stroke="#7690d2" stroke-width="2.1"/>
<g transform="translate(35.8 44.6) scale(1.13) translate(-36.2 -44.3)"><path d="M32.5 39.5 L41.5 37.3 L41.5 47.5 A2.4 2 0 1 1 39.9 45.6 L39.9 40.2 L34.1 41.6 L34.1 49.3 A2.4 2 0 1 1 32.5 47.4 Z" fill="#7690d2"/></g>
</symbol>
<symbol id="i-fphoto" viewBox="0 0 72 72">
<path d="M5.2 40 L5.2 15.8 Q5.2 14.2 7 13.8 Q8.8 13.4 9.2 11.5 L10 8 Q10.3 6.8 11.6 6.8 L32.6 6.8 Q34 6.8 34.4 8 L35.8 12.4 Q36.2 13.7 37.6 13.7 L64.8 13.7 Q66.8 13.7 66.8 15.7 L66.8 40 Z" fill="url(#gPaper)" stroke="#9c9c9c" stroke-width="1"/>
<path d="M36.5 14.7 L64.8 14.7 Q65.8 14.7 65.8 15.7 L65.8 22 L36.5 22 Z" fill="#c6c6c6" opacity=".8"/>
<path d="M2.2 29 Q2.2 26.8 4.4 26.8 L33.4 26.8 Q35 26.8 35.8 25.4 L38.6 21.4 Q39.4 20.2 41 20.2 L67.4 20.2 Q69.8 20.2 69.8 22.6 L68 60.4 Q67.8 63 65.2 63 L7.2 63 Q4.6 63 4.4 60.4 Z" fill="url(#gFold)" stroke="#6278a8" stroke-width="1.2" stroke-linejoin="round"/>
<path d="M3.5 29.3 Q3.5 28.1 4.9 28.1 L33.8 28.1 Q35.8 28 36.8 26.3 L39.5 22.4 Q40.1 21.5 41.4 21.5 L67 21.5 Q68.5 21.5 68.5 22.8" fill="none" stroke="#d2defb" stroke-width="1" opacity=".85"/>

<path d="M22.3 38.8 L32.6 38.8 L34.4 36 L42.6 36 L44.4 38.8 L49.8 38.8 L49.8 53.6 L22.3 53.6 Z" fill="#7690d2"/>
<rect x="25.4" y="40.8" width="5.2" height="1.7" fill="#a9bef0"/>
<circle cx="40.3" cy="46.2" r="5.9" fill="#a3b9ee"/><circle cx="40.3" cy="46.2" r="4.2" fill="#7690d2"/>
</symbol>
<symbol id="i-play" viewBox="0 0 72 72">
<ellipse cx="36" cy="68.5" rx="27" ry="2.6" fill="url(#gShadow)"/>
<circle cx="36" cy="35.5" r="32" fill="#cfe0ff"/>
<circle cx="36" cy="35.5" r="31" fill="url(#gPlay)"/>
<circle cx="36" cy="35.5" r="24.3" fill="#fff"/>
<path d="M26.3 21 L51.3 35.6 L26.3 50.2 Z" fill="#2565ee"/>
</symbol>
<symbol id="i-monitor" viewBox="0 0 72 72">
<ellipse cx="36" cy="68" rx="24" ry="2.2" fill="url(#gShadow)"/>
<path d="M24 59 L48 59 L51 66.5 Q51.3 68 50 68 L22 68 Q20.7 68 21 66.5 Z" fill="#1c1c1c"/>
<path d="M25 60 L47 60 L48.5 64 L23.5 64 Z" fill="#4a4a4a"/>
<rect x="3.3" y="11" width="65.4" height="47.8" rx="3" fill="url(#gBezel)"/>
<rect x="6.8" y="15" width="58.8" height="38.4" fill="url(#gScreen)"/>
<circle cx="36" cy="34" r="15.9" fill="#e4f1fb" opacity=".85"/>
<path d="M36 34 L36.00 19.00 A15 15 0 0 0 33.75 19.17 Z" fill="#ff0f00"/><path d="M36 34 L34.04 19.13 A15 15 0 0 0 31.83 19.59 Z" fill="#ff2f00"/><path d="M36 34 L32.12 19.51 A15 15 0 0 0 29.98 20.26 Z" fill="#ff4f00"/><path d="M36 34 L30.26 20.14 A15 15 0 0 0 28.24 21.16 Z" fill="#ff6f00"/><path d="M36 34 L28.50 21.01 A15 15 0 0 0 26.63 22.28 Z" fill="#ff8f00"/><path d="M36 34 L26.87 22.10 A15 15 0 0 0 25.18 23.61 Z" fill="#ffaf00"/><path d="M36 34 L25.39 23.39 A15 15 0 0 0 23.92 25.11 Z" fill="#ffcf00"/><path d="M36 34 L24.10 24.87 A15 15 0 0 0 22.86 26.76 Z" fill="#ffef00"/><path d="M36 34 L23.01 26.50 A15 15 0 0 0 22.03 28.54 Z" fill="#efff00"/><path d="M36 34 L22.14 28.26 A15 15 0 0 0 21.44 30.41 Z" fill="#cfff00"/><path d="M36 34 L21.51 30.12 A15 15 0 0 0 21.09 32.34 Z" fill="#afff00"/><path d="M36 34 L21.13 32.04 A15 15 0 0 0 21.00 34.30 Z" fill="#8fff00"/><path d="M36 34 L21.00 34.00 A15 15 0 0 0 21.17 36.25 Z" fill="#6fff00"/><path d="M36 34 L21.13 35.96 A15 15 0 0 0 21.59 38.17 Z" fill="#4fff00"/><path d="M36 34 L21.51 37.88 A15 15 0 0 0 22.26 40.02 Z" fill="#2fff00"/><path d="M36 34 L22.14 39.74 A15 15 0 0 0 23.16 41.76 Z" fill="#0fff00"/><path d="M36 34 L23.01 41.50 A15 15 0 0 0 24.28 43.37 Z" fill="#00ff0f"/><path d="M36 34 L24.10 43.13 A15 15 0 0 0 25.61 44.82 Z" fill="#00ff2f"/><path d="M36 34 L25.39 44.61 A15 15 0 0 0 27.11 46.08 Z" fill="#00ff4f"/><path d="M36 34 L26.87 45.90 A15 15 0 0 0 28.76 47.14 Z" fill="#00ff6f"/><path d="M36 34 L28.50 46.99 A15 15 0 0 0 30.54 47.97 Z" fill="#00ff8f"/><path d="M36 34 L30.26 47.86 A15 15 0 0 0 32.41 48.56 Z" fill="#00ffaf"/><path d="M36 34 L32.12 48.49 A15 15 0 0 0 34.34 48.91 Z" fill="#00ffcf"/><path d="M36 34 L34.04 48.87 A15 15 0 0 0 36.30 49.00 Z" fill="#00ffef"/><path d="M36 34 L36.00 49.00 A15 15 0 0 0 38.25 48.83 Z" fill="#00efff"/><path d="M36 34 L37.96 48.87 A15 15 0 0 0 40.17 48.41 Z" fill="#00cfff"/><path d="M36 34 L39.88 48.49 A15 15 0 0 0 42.02 47.74 Z" fill="#00afff"/><path d="M36 34 L41.74 47.86 A15 15 0 0 0 43.76 46.84 Z" fill="#008fff"/><path d="M36 34 L43.50 46.99 A15 15 0 0 0 45.37 45.72 Z" fill="#006fff"/><path d="M36 34 L45.13 45.90 A15 15 0 0 0 46.82 44.39 Z" fill="#004fff"/><path d="M36 34 L46.61 44.61 A15 15 0 0 0 48.08 42.89 Z" fill="#002fff"/><path d="M36 34 L47.90 43.13 A15 15 0 0 0 49.14 41.24 Z" fill="#000fff"/><path d="M36 34 L48.99 41.50 A15 15 0 0 0 49.97 39.46 Z" fill="#0f00ff"/><path d="M36 34 L49.86 39.74 A15 15 0 0 0 50.56 37.59 Z" fill="#2f00ff"/><path d="M36 34 L50.49 37.88 A15 15 0 0 0 50.91 35.66 Z" fill="#4f00ff"/><path d="M36 34 L50.87 35.96 A15 15 0 0 0 51.00 33.70 Z" fill="#6f00ff"/><path d="M36 34 L51.00 34.00 A15 15 0 0 0 50.83 31.75 Z" fill="#8f00ff"/><path d="M36 34 L50.87 32.04 A15 15 0 0 0 50.41 29.83 Z" fill="#af00ff"/><path d="M36 34 L50.49 30.12 A15 15 0 0 0 49.74 27.98 Z" fill="#cf00ff"/><path d="M36 34 L49.86 28.26 A15 15 0 0 0 48.84 26.24 Z" fill="#ef00ff"/><path d="M36 34 L48.99 26.50 A15 15 0 0 0 47.72 24.63 Z" fill="#ff00ef"/><path d="M36 34 L47.90 24.87 A15 15 0 0 0 46.39 23.18 Z" fill="#ff00cf"/><path d="M36 34 L46.61 23.39 A15 15 0 0 0 44.89 21.92 Z" fill="#ff00af"/><path d="M36 34 L45.13 22.10 A15 15 0 0 0 43.24 20.86 Z" fill="#ff008f"/><path d="M36 34 L43.50 21.01 A15 15 0 0 0 41.46 20.03 Z" fill="#ff006f"/><path d="M36 34 L41.74 20.14 A15 15 0 0 0 39.59 19.44 Z" fill="#ff004f"/><path d="M36 34 L39.88 19.51 A15 15 0 0 0 37.66 19.09 Z" fill="#ff002f"/><path d="M36 34 L37.96 19.13 A15 15 0 0 0 35.70 19.00 Z" fill="#ff000f"/><circle cx="36" cy="34" r="15" fill="url(#gWheelW)"/>
<circle cx="36" cy="34" r="4.4" fill="#86bde8"/><circle cx="36" cy="34" r="4.4" fill="none" stroke="#fff" stroke-opacity=".45" stroke-width=".8"/>
<circle cx="36" cy="56.6" r="1" fill="#35e070"/>
</symbol>
<symbol id="i-hidden" viewBox="0 0 72 72">
<rect x="4.2" y="6.6" width="63.3" height="59.8" rx="4" fill="#ececec"/>
<rect x="5.6" y="8" width="60.5" height="57" rx="2.8" fill="#5e5e5e"/>
<rect x="9.7" y="20.3" width="25" height="18.7" fill="#f2f2f2"/><rect x="9.7" y="20.3" width="25" height="2.2" fill="#cfcfcf"/><rect x="9.7" y="22.5" width="25" height="2.2" fill="#aaa"/><rect x="9.7" y="24.7" width="7.5" height="14.3" fill="#c9c9c9"/>
<path d="M18 27.5 H34 M18 30.3 H34 M18 33.1 H34 M18 35.9 H34" stroke="#cfe9e9" stroke-width="1.3"/>
<rect x="37.8" y="20.3" width="25.2" height="18.7" fill="#f6f6f6"/><rect x="37.8" y="20.3" width="25.2" height="2.2" fill="#cfcfcf"/><rect x="37.8" y="22.5" width="25.2" height="2.2" fill="#aaa"/>
<g fill="#9fb8ea"><rect x="40" y="27" width="5" height="4"/><rect x="47.5" y="27" width="5" height="4"/><rect x="55" y="27" width="5" height="4"/><rect x="40" y="33" width="5" height="4"/><rect x="47.5" y="33" width="5" height="4"/></g>
<rect x="9.7" y="42.4" width="25" height="19" fill="#e9e9e9"/><rect x="9.7" y="42.4" width="25" height="2.2" fill="#cfcfcf"/><rect x="9.7" y="44.6" width="25" height="2.2" fill="#aaa"/><rect x="26" y="46.8" width="5" height="14.6" fill="#d2d2d2"/>
<rect x="10.5" y="48" width="15" height="12.5" rx="1" fill="#222"/><rect x="11.8" y="49.3" width="12.4" height="9.9" fill="#8cc6ea"/><circle cx="22.5" cy="53.5" r="1" fill="#c03030"/>
<circle cx="9.2" cy="10.8" r="7.3" fill="#fff"/><circle cx="9.2" cy="10.8" r="5.8" fill="#3c3c3c"/>
<path d="M6.5 8.1 L11.9 13.5 M11.9 8.1 L6.5 13.5" stroke="#fff" stroke-width="1.8"/>
</symbol>
<symbol id="i-house" viewBox="0 0 72 72">
<ellipse cx="36" cy="67" rx="27" ry="1.8" fill="url(#gShadow)"/>
<rect x="45.6" y="6" width="15" height="24" fill="url(#gWall)" stroke="#3c2c1c" stroke-width="1"/>
<rect x="45.2" y="2.8" width="15.8" height="4" fill="#8a8a8a" stroke="#4a4a4a" stroke-width=".9"/>
<path d="M12.5 29 L36 7 L60.1 29 L60.1 66.2 L12.5 66.2 Z" fill="url(#gWall)" stroke="#3a2a1a" stroke-width="1.3"/>
<path d="M13.8 31.5 L13.8 65 M58.8 31.5 L58.8 65" stroke="#fff" stroke-width="1" opacity=".55"/>
<path d="M2.6 31 L35.9 1.4 L68.8 31 L63 31 L35.9 8.2 L8.4 31 Z" fill="url(#gRoof)" stroke="#4a1e05" stroke-width=".9" stroke-linejoin="round"/>
<rect x="33.4" y="37" width="10.8" height="29.2" fill="#4e2409" stroke="#2a1203" stroke-width="1.1"/>
<rect x="35" y="38.5" width="3" height="26.5" fill="#6b3411" opacity=".6"/>
<circle cx="41.3" cy="51.7" r="1.5" fill="#fff3b0"/><circle cx="41.3" cy="51.7" r=".8" fill="#ffd84a"/>
</symbol>
<symbol id="i-password" viewBox="0 0 72 72">
<path d="M12.9 22.8 L59.3 22.8 L67.8 57.4 L67.8 66.8 Q67.8 68.4 66.3 68.4 L6.5 68.4 Q5 68.4 5 66.8 L5 57.4 Z" fill="#161616"/>
<path d="M13.4 23.3 L58.8 23.3 L67.3 57.4 L5.5 57.4 Z" fill="url(#gBlkTop)"/>
<rect x="5.7" y="57.8" width="61.4" height="9.9" rx="1" fill="url(#gBlkFront)"/>
<rect x="5.3" y="57" width="62.2" height="1.1" fill="#7e7e7e"/>
<g transform="translate(46.2 14.3) rotate(136)" stroke="#8a6508" stroke-width=".9" stroke-linejoin="round">
<path d="M-12.9 0 A12.9 12.9 0 1 0 12.9 0 A12.9 12.9 0 1 0 -12.9 0 Z M-7.5 0 A7.5 7.5 0 1 1 7.5 0 A7.5 7.5 0 1 1 -7.5 0 Z" fill="url(#gKey2)" fill-rule="evenodd"/>
<path d="M6 2.4 L14.4 2.4 L14.4 3.8 L17.6 3.8 L17.6 2.4 L45 2.4 L45 -2.4 L43 -2.4 L43 -8.4 L36.8 -8.4 L36.8 -5.4 L33.6 -5.4 L33.6 -8.4 L29.8 -8.4 L29.8 -2.4 L27.2 -2.4 L27.2 -8.4 L23.3 -8.4 L23.3 -2.4 L17.6 -2.4 L17.6 -3.8 L14.4 -3.8 L14.4 -2.4 L6 -2.4 Z" fill="url(#gKey2)"/>
<circle r="10.4" fill="none" stroke="#fff6a0" stroke-width="1.3" opacity=".7"/>
<path d="M18 0.6 L43 0.6" stroke="#fff6a0" stroke-width="1" opacity=".8"/>
</g>
</symbol>
<symbol id="i-gear" viewBox="0 0 72 72">
<ellipse cx="36" cy="68.3" rx="28" ry="2.6" fill="url(#gShadow)"/>
<g transform="translate(0 35.8) scale(1 .977) translate(0 -35.8)"><path d="M58.42 26.68 Q59.50 29.30 62.46 29.79 L66.05 30.38 Q68.61 30.80 68.61 33.40 L68.61 38.20 Q68.61 40.80 66.05 41.22 L62.46 41.81 Q59.50 42.30 58.42 44.92 L58.42 44.92 Q57.33 47.54 59.08 49.98 L61.20 52.93 Q62.71 55.04 60.88 56.88 L57.48 60.28 Q55.64 62.11 53.53 60.60 L50.58 58.48 Q48.14 56.73 45.52 57.82 L45.52 57.82 Q42.90 58.90 42.41 61.86 L41.82 65.45 Q41.40 68.01 38.80 68.01 L34.00 68.01 Q31.40 68.01 30.98 65.45 L30.39 61.86 Q29.90 58.90 27.28 57.82 L27.28 57.82 Q24.66 56.73 22.22 58.48 L19.27 60.60 Q17.16 62.11 15.32 60.28 L11.92 56.88 Q10.09 55.04 11.60 52.93 L13.72 49.98 Q15.47 47.54 14.38 44.92 L14.38 44.92 Q13.30 42.30 10.34 41.81 L6.75 41.22 Q4.19 40.80 4.19 38.20 L4.19 33.40 Q4.19 30.80 6.75 30.38 L10.34 29.79 Q13.30 29.30 14.38 26.68 L14.38 26.68 Q15.47 24.06 13.72 21.62 L11.60 18.67 Q10.09 16.56 11.92 14.72 L15.32 11.32 Q17.16 9.49 19.27 11.00 L22.22 13.12 Q24.66 14.87 27.28 13.78 L27.28 13.78 Q29.90 12.70 30.39 9.74 L30.98 6.15 Q31.40 3.59 34.00 3.59 L38.80 3.59 Q41.40 3.59 41.82 6.15 L42.41 9.74 Q42.90 12.70 45.52 13.78 L45.52 13.78 Q48.14 14.87 50.58 13.12 L53.53 11.00 Q55.64 9.49 57.48 11.32 L60.88 14.72 Q62.71 16.56 61.20 18.67 L59.08 21.62 Q57.33 24.06 58.42 26.68 Z M23.7 35.8 A12.7 12.7 0 1 0 49.099999999999994 35.8 A12.7 12.7 0 1 0 23.7 35.8 Z" fill="url(#gGear)" fill-rule="evenodd" stroke="#646e94" stroke-width="1.40" stroke-linejoin="round"/>
<path d="M17.099999999999998 35.8 A19.3 19.3 0 1 0 55.7 35.8 A19.3 19.3 0 1 0 17.099999999999998 35.8 Z M23.1 35.8 A13.299999999999999 13.299999999999999 0 1 0 49.699999999999996 35.8 A13.299999999999999 13.299999999999999 0 1 0 23.1 35.8 Z" fill="url(#gGearIn)" fill-rule="evenodd"/>
<circle cx="36.4" cy="35.8" r="19.3" fill="none" stroke="url(#gGear2)" stroke-width="1.10"/>
<circle cx="36.4" cy="35.8" r="13.90" fill="none" stroke="#eef1fb" stroke-width="1.00" opacity=".9"/>
</g></symbol>
<symbol id="i-photos" viewBox="0 0 72 72">
<ellipse cx="35" cy="67.8" rx="29" ry="2.4" fill="url(#gShadow)"/>
<g transform="translate(5.2 -1) rotate(-25 9 40)"><rect x="3" y="22" width="36" height="40" rx="1.5" fill="#f6f6f6" stroke="#8a8a8a" stroke-width="1"/><rect x="7" y="26" width="28" height="22" fill="#e9efe2"/><circle cx="15" cy="36" r="1.6" fill="#7bbf3a"/></g>
<g transform="translate(-3.4 0.4) rotate(9.5 46 32)"><rect x="25.5" y="8.5" width="42" height="50" rx="1.5" fill="#fafafa" stroke="#8a8a8a" stroke-width="1"/><rect x="29.5" y="13" width="33" height="30" fill="#1c0d05"/><rect x="52" y="13" width="10.5" height="30" fill="#7a3208"/><rect x="57.5" y="13" width="5" height="30" fill="#c86a1c"/></g>
<rect x="14.4" y="15.6" width="44.6" height="48.5" rx="2" fill="url(#gPhoto)" stroke="#4a4a4a" stroke-width="1.3"/>
<rect x="20.2" y="21.4" width="33.4" height="27.3" fill="url(#gSky)"/>
<path d="M20.2 21.4 L53.6 21.4 L53.6 26 Q46 25 40 30 Q33 34 20.2 35.5 Z" fill="#fff" opacity=".72"/>
<path d="M30 33 Q40 27 53.6 30 L53.6 32.5 Q42 31 32 35 Z" fill="#fff" opacity=".35"/>
<circle cx="44.5" cy="38" r="2" fill="#d02a2a"/><circle cx="28.6" cy="29.4" r=".9" fill="#222"/><ellipse cx="23.6" cy="41.6" rx="1.3" ry="2" fill="#1e2a6a" transform="rotate(25 23.6 41.6)"/><circle cx="24.6" cy="39.4" r=".8" fill="#c0272d"/>
</symbol>
</defs></svg>
<div class="app" style="left:7px"><svg class="ic" viewBox="0 0 72 72"><use href="#i-hddgear"/></svg><div class="nm">Gestione di<br>sco</div></div>
<div class="app" style="left:103px"><svg class="ic" viewBox="0 0 72 72"><use href="#i-fvideo"/></svg><div class="nm">I miei video</div></div>
<div class="app" style="left:199px"><svg class="ic" viewBox="0 0 72 72"><use href="#i-infoserver"/></svg><div class="nm">Info server</div></div>
<div class="app" style="left:295px"><svg class="ic" viewBox="0 0 72 72"><use href="#i-hddinfo"/></svg><div class="nm">Informazion<br>i Disk</div></div>
<div class="app" style="left:391px"><svg class="ic" viewBox="0 0 72 72"><use href="#i-fmusic"/></svg><div class="nm">La mia musi<br>ca</div></div>
<div class="app" style="left:487px"><svg class="ic" viewBox="0 0 72 72"><use href="#i-fphoto"/></svg><div class="nm">Le mie foto</div></div>
<div class="app" style="left:583px"><svg class="ic" viewBox="0 0 72 72"><use href="#i-play"/></svg><div class="nm">Lettore mul<br>timediale</div></div>
<div class="app" style="left:679px"><svg class="ic" viewBox="0 0 72 72"><use href="#i-monitor"/></svg><div class="nm">Modalità di<br>sistema</div></div>
<div class="app" style="left:775px"><svg class="ic" viewBox="0 0 72 72"><use href="#i-hidden"/></svg><div class="nm">Mostra fine<br>stre nascos<br>te</div></div>
<div class="app" style="left:871px"><svg class="ic" viewBox="0 0 72 72"><use href="#i-house"/></svg><div class="nm">My LinkStat<br>ion</div></div>
<div class="app" style="left:967px"><svg class="ic" viewBox="0 0 72 72"><use href="#i-password"/></svg><div class="nm">Password</div></div>
<div class="app sel" style="left:1063px"><svg class="ic" viewBox="0 0 72 72"><use href="#i-gear"/></svg><div class="nm">Preferenze</div></div>
<div class="app" style="left:1159px"><svg class="ic" viewBox="0 0 72 72"><use href="#i-photos"/></svg><div class="nm">Visualizzato<br>re immagini</div></div>
<!-- DOCK -->
<div id="dock" class="abs"><div id="dockhd"></div><div class="dcell" style="top:24.2px"><svg style="position:absolute;left:1.9px;top:1.6px" width="72" height="72" viewBox="0 0 72 72"><use href="#i-house"/></svg></div><div class="dcell" style="top:106.2px"><svg style="position:absolute;left:1.9px;top:1.6px" width="72" height="72" viewBox="0 0 72 72"><use href="#i-play"/></svg></div><div class="dcell" style="top:188.2px"><svg style="position:absolute;left:1.9px;top:1.6px" width="72" height="72" viewBox="0 0 72 72"><use href="#i-hddgear"/></svg></div><div class="dcell" style="top:270.2px"><svg style="position:absolute;left:1.9px;top:1.6px" width="72" height="72" viewBox="0 0 72 72"><use href="#i-gear"/></svg></div></div>
<!-- STATUS -->
<div id="status" class="abs"><div class="dk"></div><span>undefined elementi.</span></div>
<!--STATUSICONS-->
<svg class="abs" style="left:9px;top:1020px" width="12" height="12" viewBox="0 0 12 12"><circle cx="6" cy="6" r="6" fill="#2f4f2a"/><rect x="5" y="5" width="2.1" height="4.8" fill="#fff"/><rect x="5" y="2.2" width="2.1" height="2" fill="#fff"/></svg>
<svg class="abs" style="left:1788px;top:1019px" width="108" height="14" viewBox="0 0 108 14"><rect x="2" y="6.3" width="18" height="1.2" fill="#555"/><rect x="20" y="6.3" width="85" height="1" fill="#9a9a9a"/><rect x="20" y="7.3" width="85" height="1" fill="#c9c9c9"/><circle cx="20" cy="7" r="5.6" fill="#f3f3f3" stroke="#8a8a8a" stroke-width="1"/><circle cx="20" cy="7" r="1.8" fill="#444"/></svg>
<svg class="abs" style="left:1901px;top:1022px" width="16" height="15" viewBox="0 0 16 15"><path d="M15 1 L1 15 M15 5 L5 15 M15 9 L9 15 M15 13 L13 15" stroke="#4a4a4a" stroke-width="1.3"/></svg>
<svg class="abs" style="left:1825px;top:677px" width="9" height="10" viewBox="0 0 9 10"><path d="M0.8 3.2 L4 0.6 M0.8 3.2 L4 5.8 M0.8 3.2 H4.5 Q8 3.2 8 9.2" fill="none" stroke="#444" stroke-width="1.2"/></svg>
<svg class="abs" style="left:1904px;top:678px" width="6" height="8" viewBox="0 0 6 8"><path d="M3 0 L5.8 3 H0.2 Z M3 4.2 L5.8 7.4 H0.2 Z" fill="#444"/></svg>
<!--/STATUSICONS-->
<!-- DIALOG -->
<div id="dlg" class="abs">
<div id="dhead"></div>
<div id="dtitle">CONDIVISI</div>
<div class="dbtn" style="left:565.2px"><svg width="19.5" height="11" viewBox="0 0 19.5 11"><rect x="5.8" y="8" width="6" height="1.8" fill="#3c3c3c"/></svg></div>
<div class="dbtn" style="left:590px"><svg width="19.5" height="11" viewBox="0 0 19.5 11"><rect x="6.75" y="2.8" width="7" height="6.4" fill="none" stroke="#3c3c3c" stroke-width="1.1"/><rect x="6.2" y="2.1" width="8.1" height="1.9" fill="#3c3c3c"/></svg></div>
<div class="dbtn" style="left:615px"><svg width="19.5" height="11" viewBox="0 0 19.5 11"><path d="M6.3 2.2 L13.7 9.6 M13.7 2.2 L6.3 9.6" stroke="#3c3c3c" stroke-width="1.9" fill="none"/></svg></div>
<div id="backbtn" style="position:absolute;left:24px;top:31px;width:22.5px;height:15.5px;border:1px solid #5d5d5d;border-radius:2px;background:linear-gradient(#d2d2d2,#bcbcbc);font-size:13px;line-height:13px;text-align:center;color:#444;font-weight:bold">&lt;</div>
<div class="tbl" style="left:10px;width:320px">
<div class="hd"></div>
<div class="hc" style="left:0;width:55px"></div><div class="hc" style="left:55px;width:193px"></div>
<div class="ht" style="left:10px">Nome</div><div class="ht" style="left:64px">Cartella contenuti multimediali</div>
<div class="row" style="top:19px;height:19px"><div style="position:absolute;left:0;top:0;width:145px;height:19px;background:linear-gradient(#86d9c9 0%,#5cc2b0 45%,#36a68f 100%)"></div><span style="left:10px">Public</span><span style="left:64px">/home/Public</span></div><div class="row alt" style="top:38px;height:19px"></div><div class="row" style="top:57px;height:19px"></div><div class="row alt" style="top:76px;height:19px"></div><div class="row" style="top:95px;height:19px"></div><div class="row alt" style="top:114px;height:19px"></div><div class="row" style="top:133px;height:19px"></div><div class="row alt" style="top:152px;height:19px"></div><div class="row" style="top:171px;height:19px"></div><div class="row alt" style="top:190px;height:12px"></div>
</div>
<div class="tbl" style="left:350px;width:280px">
<div class="hd"></div>
<div class="hc" style="left:0;width:121px"></div><div class="hc" style="left:121px;width:60px"></div><div class="hc" style="left:181px;width:90px"></div>
<div class="ht" style="left:10px">Nome servizio</div><div class="ht" style="left:130px">Abilita</div><div class="ht" style="left:190px">Time Machine</div>
<div class="row" style="top:19px;height:19px"><span style="left:10px">SMB</span><div class="cb" style="left:130px"><svg width="11" height="11" viewBox="0 0 11 11" style="position:absolute;left:0;top:0"><path d="M1.6 5.4 L4.2 8.2 L9.6 2.2" fill="none" stroke="#222" stroke-width="1.5"/></svg></div><div class="cb dis" style="left:190px"></div></div><div class="row alt" style="top:38px;height:19px"><span style="left:10px">FTP</span><div class="cb" style="left:130px"></div><div class="cb dis" style="left:190px"></div></div><div class="row" style="top:57px;height:19px"><span style="left:10px">AFP</span><div class="cb" style="left:130px"></div><div class="cb " style="left:190px"></div></div><div class="row alt" style="top:76px;height:19px"><span style="left:10px">DLNA</span><div class="cb" style="left:130px"><svg width="11" height="11" viewBox="0 0 11 11" style="position:absolute;left:0;top:0"><path d="M1.6 5.4 L4.2 8.2 L9.6 2.2" fill="none" stroke="#222" stroke-width="1.5"/></svg></div><div class="cb dis" style="left:190px"></div></div><div class="row" style="top:95px;height:19px"></div><div class="row alt" style="top:114px;height:19px"></div><div class="row" style="top:133px;height:19px"></div><div class="row alt" style="top:152px;height:19px"></div><div class="row" style="top:171px;height:19px"></div><div class="row alt" style="top:190px;height:12px"></div>
</div>
<div class="pbtn" style="left:92px">Aggiungi</div>
<div class="pbtn" style="left:211px">Elimina</div>
<div class="pbtn" style="left:330px">Salva</div>
<div class="pbtn" style="left:449px">Aggiorna</div>
<svg class="abs" style="right:-1px;bottom:-1px" width="13" height="13" viewBox="0 0 13 13"><path d="M13 1 L1 13 M13 5.5 L5.5 13 M13 10 L10 13" stroke="#666" stroke-width="1.2" fill="none"/></svg>
</div>
<!--WATERMARK-->
<div class="abs" style="left:1633px;top:970px;width:72px;height:70px;opacity:.6">
<svg width="72" height="70" viewBox="0 0 72 70"><defs><linearGradient id="gWm" x1="0.1" y1="0" x2=".8" y2="1"><stop offset="0" stop-color="#f4f7ff"/><stop offset=".4" stop-color="#9db4f2"/><stop offset="1" stop-color="#3f60cc"/></linearGradient></defs>
<path d="M25 9 L63.5 17.5 L50 61 L6.5 46 Z" fill="#c4c4c4" stroke="#c4c4c4" stroke-width="9" stroke-linejoin="round"/>
<path d="M25.5 10 L62 18 L49.3 59.5 L8 45.3 Z" fill="url(#gWm)" stroke="url(#gWm)" stroke-width="5" stroke-linejoin="round"/>
<path d="M25.3 22 L42.5 42.3 M19 37.7 L49.5 26.7" stroke="#fff" stroke-width="5" stroke-linecap="round"/></svg></div>
<div class="abs" style="left:1702px;top:995px;font-size:21.5px;letter-spacing:0;color:#9babd9;mix-blend-mode:multiply;white-space:nowrap;transform-origin:0 0;transform:scaleX(.894)">xtremehardware.com</div>
<svg class="abs" style="left:679px;top:605px" width="13" height="20" viewBox="0 0 13 20"><path d="M0.7 0.8 L0.7 16 L4.3 12.6 L6.9 18.6 L9.3 17.5 L6.7 11.7 L11.6 11.5 Z" fill="#fff" stroke="#111" stroke-width="1" stroke-linejoin="round"/></svg>
<!--/WATERMARK-->
</div>
</body>
</html>
